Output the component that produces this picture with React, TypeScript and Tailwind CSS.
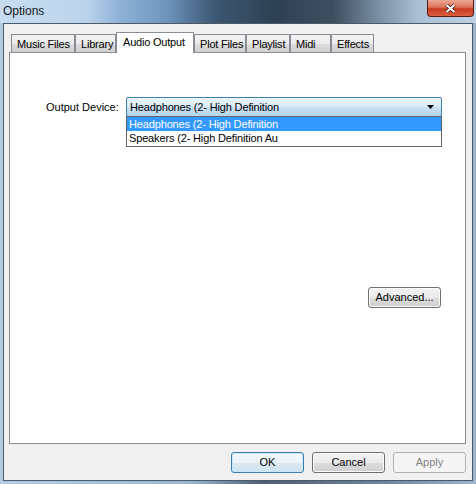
import React from 'react';

const tabs = [
  { label: 'Music Files', w: 'w-[64px]' },
  { label: 'Library', w: 'w-[41px]' },
  { label: 'Audio Output', w: 'w-[78px]', active: true },
  { label: 'Plot Files', w: 'w-[52px]' },
  { label: 'Playlist', w: 'w-[44px]' },
  { label: 'Midi', w: 'w-[41px]' },
  { label: 'Effects', w: 'w-[43px]' },
];

const Button = ({ children, variant }: { children: React.ReactNode; variant?: 'default' | 'disabled' }) => {
  if (variant === 'default') {
    return (
      <div className="w-[73px] h-[21px] rounded-[3px] border border-[#3c7fb1] bg-[linear-gradient(#f4f9fc_0%,#e9f3f9_50%,#dbeaf3_50%,#cfe3ef_100%)] shadow-[inset_0_0_0_1px_#c9e7f9] flex items-center justify-center">
        {children}
      </div>
    );
  }
  if (variant === 'disabled') {
    return (
      <div className="w-[73px] h-[21px] rounded-[3px] border border-[#adb2b5] bg-[#f4f4f4] text-[#838383] flex items-center justify-center">
        {children}
      </div>
    );
  }
  return (
    <div className="w-[73px] h-[21px] rounded-[3px] border border-[#707070] bg-[linear-gradient(#f2f2f2_0%,#ebebeb_50%,#dddddd_50%,#cfcfcf_100%)] shadow-[inset_0_0_0_1px_#fbfbfb] flex items-center justify-center">
      {children}
    </div>
  );
};

export default function App() {
  return (
    <div className="w-[476px] h-[484px] flex flex-col overflow-hidden bg-[linear-gradient(90deg,#b4cbe2_0%,#9db6cf_40%,#4d5f71_55%,#6f8398_80%,#9fb5ca_100%)] font-['Liberation_Sans',Arial,sans-serif] text-[11px] text-black">
      {/* title bar */}
      <div className="h-[23px] flex items-start justify-between bg-[linear-gradient(90deg,#c7dcf0_0%,#bcd4ec_18%,#8fb2d6_25%,#6e95bd_35%,#3d5873_45%,#2e4153_58%,#3e4e5e_70%,#7d92a7_80%,#aac0d5_88%,#bed1e3_100%)]">
        <span className="pl-[3px] pt-[3px] text-[12px] leading-[16px] text-[#151c24]">Options</span>
        <div className="mr-[2px] w-[47px] h-[17px] rounded-b-[4px] border border-t-0 border-[#5a1f1a] bg-[linear-gradient(#eca894_0%,#dc7258_45%,#c73c20_55%,#d9603f_100%)] flex items-center justify-center">
          <svg width="11" height="9" viewBox="0 0 11 9">
            <path d="M1.5 1 L9.5 8 M9.5 1 L1.5 8" stroke="#3a1410" strokeWidth="3.4" />
            <path d="M1.5 1 L9.5 8 M9.5 1 L1.5 8" stroke="#ffffff" strokeWidth="2" />
          </svg>
        </div>
      </div>

      {/* client area */}
      <div className="flex-1 mx-[3px] mb-[3px] border border-[#4b5a69] bg-[#f0f0f0] flex flex-col pt-[8px] pb-[7px]">
        {/* tab strip */}
        <div className="h-[20px] ml-[7px] flex items-end tracking-[-0.2px]">
          {tabs.map((t) =>
            t.active ? (
              <div
                key={t.label}
                className={`${t.w} h-[21px] -mb-px relative z-10 bg-white border border-b-0 border-[#898c95] pl-[6px] pt-[2px] leading-[14px] whitespace-nowrap overflow-hidden`}
              >
                {t.label}
              </div>
            ) : (
              <div
                key={t.label}
                className={`${t.w} h-[18px] bg-[linear-gradient(#f2f2f2_0%,#ebebeb_50%,#dddddd_50%,#cfcfcf_100%)] border border-b-0 border-[#898c95] pl-[5px] pt-[2px] leading-[14px] whitespace-nowrap overflow-hidden`}
              >
                {t.label}
              </div>
            )
          )}
        </div>

        {/* tab panel */}
        <div className="flex-1 ml-[5px] mr-[6px] bg-white border border-[#898c95] flex flex-col pl-[36px] pr-[23px] pt-[44px]">
          <div className="flex items-center h-[20px]">
            <span className="w-[80px] whitespace-nowrap">Output Device:</span>
            <div className="relative flex-1 h-[20px] tracking-[-0.15px]">
              <div className="h-[20px] rounded-[2px] border border-[#3c7fb1] bg-[linear-gradient(#eaf4fb_0%,#dcecf8_45%,#c6def1_55%,#b9d6ee_100%)] flex items-center justify-between pl-[3px] pr-[7px]">
                <span className="leading-[14px] whitespace-nowrap">Headphones (2- High Definition</span>
                <svg width="7" height="4" viewBox="0 0 7 4">
                  <path d="M0 0 H7 L3.5 4 Z" fill="#000" />
                </svg>
              </div>
              <div className="absolute left-0 right-0 top-[19px] h-[31px] bg-white border border-[#646464] flex flex-col z-20">
                <div className="h-[14px] bg-[#3399ff] text-white pl-[2px] leading-[14px] whitespace-nowrap">Headphones (2- High Definition</div>
                <div className="h-[14px] pl-[2px] leading-[14px] whitespace-nowrap">Speakers (2- High Definition Au</div>
              </div>
            </div>
          </div>
          <div className="mt-[170px] self-end mr-[1px]">
            <Button>Advanced...</Button>
          </div>
        </div>

        {/* dialog buttons */}
        <div className="mt-[8px] h-[21px] flex justify-end gap-[8px] pr-[6px]">
          <Button variant="default">OK</Button>
          <Button>Cancel</Button>
          <Button variant="disabled">Apply</Button>
        </div>
      </div>
    </div>
  );
}
